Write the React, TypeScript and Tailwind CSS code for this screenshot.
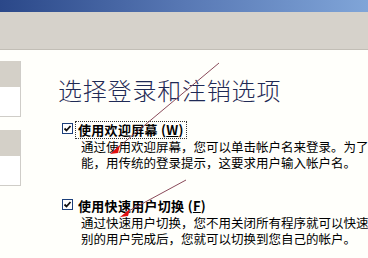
import React from "react";

const Check = () => (
  <span className="mt-[2px] flex h-[11px] w-[11px] shrink-0 items-center justify-center border border-[#1c3f7a] bg-white">
    <svg width="9" height="9" viewBox="0 0 9 9">
      <path d="M1.5 4.5 L3.5 6.5 L7.5 2" stroke="#111" strokeWidth="1.8" fill="none" />
    </svg>
  </span>
);

const SidePanel = () => (
  <div className="w-[21px] border-r border-b border-[#cfcdc8]">
    <div className="h-[26px] bg-[#d4d0c8]" />
    <div className="h-[29px] bg-white" />
  </div>
);

const App = () => {
  return (
    <div
      className="relative h-[258px] w-[368px] overflow-hidden bg-[#fffffb] text-black"
      style={{ fontFamily: '"Noto Sans CJK SC", "Noto Sans", sans-serif' }}
    >
      <div className="h-3 bg-gradient-to-r from-[#2b4889] via-[#5878b4] to-[#80a5d8]" />
      <div className="h-[38px] border-b border-[#c2beb6] bg-[#d6d2cb]" />

      <div className="flex">
        <div className="flex flex-col gap-[13px] pt-[11px]">
          <SidePanel />
          <SidePanel />
        </div>

        <div className="pl-[37px] pt-[26px]">
          <h1 className="text-[24px] leading-[28px] font-light tracking-[0.8px] text-[#1f2a55]">
            选择登录和注销选项
          </h1>

          <div className="mt-[17px] flex items-start gap-[2px] pl-[4px]">
            <Check />
            <div className="text-[12.5px] leading-[16px]">
              <span className="inline-block border border-dotted border-[#333] px-[2px] text-[13px] font-bold tracking-[0.3px]">
                使用欢迎屏幕 (<span className="underline">W</span>)
              </span>
              <p className="pl-[6px] whitespace-nowrap">通过使用欢迎屏幕，您可以单击帐户名来登录。为了</p>
              <p className="pl-[6px] whitespace-nowrap">能，用传统的登录提示，这要求用户输入帐户名。</p>
            </div>
          </div>

          <div className="mt-[26px] flex items-start gap-[2px] pl-[4px]">
            <Check />
            <div className="text-[12.5px] leading-[16px]">
              <span className="inline-block border border-transparent px-[2px] text-[13px] font-bold tracking-[0.3px]">
                使用快速用户切换 (<span className="underline">F</span>)
              </span>
              <p className="pl-[6px] whitespace-nowrap">通过快速用户切换，您不用关闭所有程序就可以快速</p>
              <p className="pl-[6px] whitespace-nowrap">别的用户完成后，您就可以切换到您自己的帐户。</p>
            </div>
          </div>
        </div>
      </div>

      <svg className="absolute left-0 top-0" width="368" height="258">
        <line x1="219" y1="63" x2="115" y2="150" stroke="#8a4a5a" strokeWidth="1" />
        <path d="M110 154 L120 145 L118 153 Z" fill="#e01010" />
        <line x1="186" y1="180" x2="125" y2="213" stroke="#8a4a5a" strokeWidth="1" />
        <path d="M120 217 L130 209 L128 216 Z" fill="#e01010" />
      </svg>
    </div>
  );
};

export default App;
